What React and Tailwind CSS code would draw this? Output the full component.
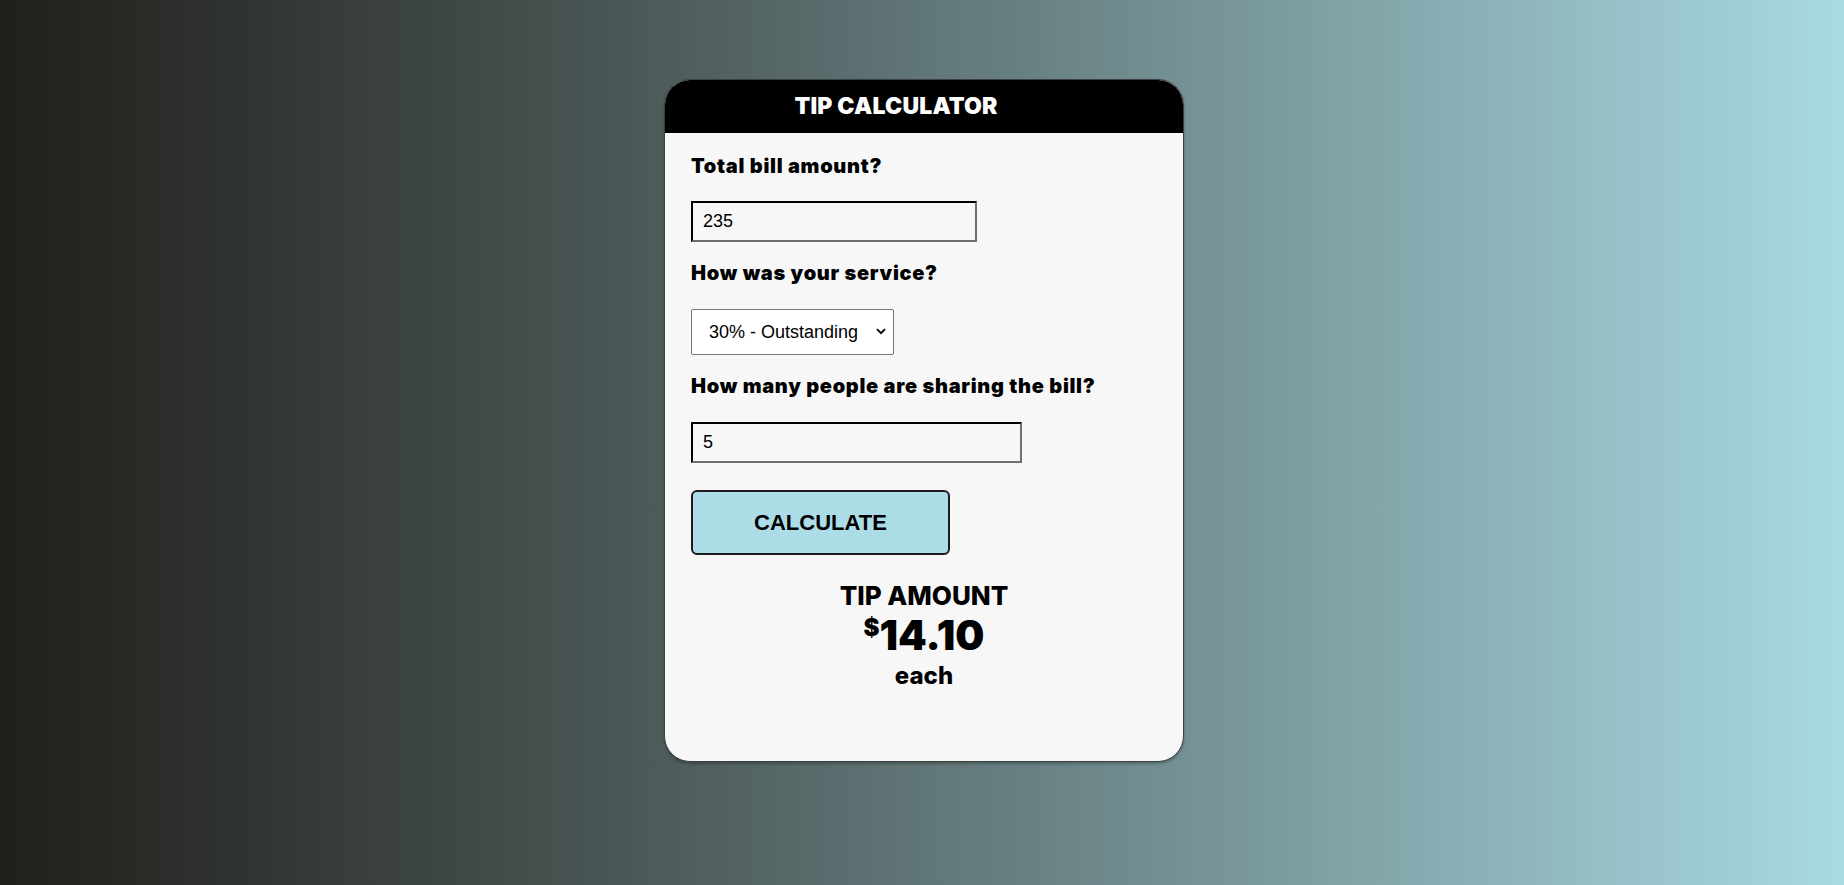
import { useState } from "react";

export default function App() {
  const [bill, setBill] = useState("235");
  const [service, setService] = useState("0.3");
  const [people, setPeople] = useState("5");
  const [tip, setTip] = useState("14.10");

  const calculate = () => {
    const b = parseFloat(bill) || 0;
    const p = parseInt(people) || 1;
    setTip(((b * parseFloat(service)) / p).toFixed(2));
  };

  const label =
    "font-['Inter',sans-serif] font-black text-[20px] leading-[24px] tracking-[0.7px] text-black";
  const input =
    "block h-[41px] border-2 border-t-black border-l-black border-b-[#707070] border-r-[#707070] bg-transparent pl-[10px] font-['Liberation_Sans',Arial,sans-serif] text-[18px] text-black outline-none";

  return (
    <div className="min-h-screen w-full bg-linear-to-r from-[#201f1b] to-[#a9dae3] pt-[79px] flex justify-center pl-[4px]">
      <div className="w-[520px] h-[683px] rounded-[26px] border border-[#3a3f40] bg-[#f7f7f7] overflow-hidden shadow-[0_2px_3px_rgba(0,0,0,0.25)]">
        {/* Header */}
        <div className="h-[53px] bg-black flex items-center justify-center pr-[56px]">
          <h1 className="font-['Inter',sans-serif] font-black text-[23px] tracking-[0.2px] text-white">
            TIP CALCULATOR
          </h1>
        </div>

        <div className="px-[26px] pt-[21px]">
          <p className={label}>Total bill amount?</p>
          <input
            className={`${input} w-[286px] mt-[23px]`}
            value={bill}
            onChange={(e) => setBill(e.target.value)}
          />

          <p className={`${label} mt-[19px]`}>How was your service?</p>
          <div className="relative mt-[24px] w-[203px]">
            <select
              className="block appearance-none w-[203px] h-[46px] border border-[#767676] rounded-[2px] bg-white pl-[17px] pr-[30px] font-['Liberation_Sans',Arial,sans-serif] text-[18px] text-black outline-none"
              value={service}
              onChange={(e) => setService(e.target.value)}
            >
              <option value="0.3">30% - Outstanding</option>
              <option value="0.2">20% - Good</option>
              <option value="0.15">15% - It was OK</option>
              <option value="0.1">10% - Bad</option>
              <option value="0.05">5% - Terrible</option>
            </select>
            <svg
              className="pointer-events-none absolute right-[8px] top-[19px]"
              width="10"
              height="7"
              viewBox="0 0 10 7"
              fill="none"
            >
              <path d="M1 1.2 L5 5.2 L9 1.2" stroke="#000" strokeWidth="1.9" />
            </svg>
          </div>

          <p className={`${label} mt-[19px]`}>How many people are sharing the bill?</p>
          <input
            className={`${input} w-[331px] mt-[24px]`}
            value={people}
            onChange={(e) => setPeople(e.target.value)}
          />

          <button
            onClick={calculate}
            className="block mt-[27px] w-[259px] h-[65px] rounded-[6px] border-2 border-[#1c1c1c] bg-[#acdde7] font-['Liberation_Sans',Arial,sans-serif] font-bold text-[22px] text-black"
          >
            CALCULATE
          </button>

          <div className="mt-[25px] text-center font-['Inter',sans-serif] text-black">
            <p className="font-extrabold text-[26px] leading-[31px]">TIP AMOUNT</p>
            <p className="font-black text-[41px] leading-[44px] mt-[2px]">
              <span className="text-[24px] relative top-[-14px]">$</span>
              {tip}
            </p>
            <p className="font-extrabold text-[24px] leading-[29px] mt-[-3px]">each</p>
          </div>
        </div>
      </div>
    </div>
  );
}
